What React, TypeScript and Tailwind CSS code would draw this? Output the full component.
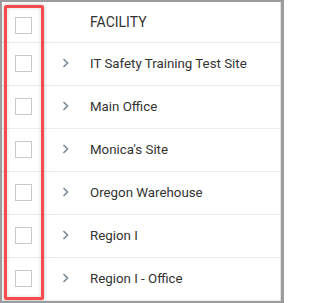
import React from "react";

const items = [
  "IT Safety Training Test Site",
  "Main Office",
  "Monica's Site",
  "Oregon Warehouse",
  "Region I",
  "Region I - Office",
];

function Box() {
  return <div className="w-[17px] h-[17px] border border-[#c9c9c9] bg-white shrink-0" />;
}

function Chevron() {
  return (
    <svg width="7" height="10" viewBox="0 0 7 10" className="shrink-0">
      <path d="M1.5 1 L5.5 5 L1.5 9" fill="none" stroke="#7f8c99" strokeWidth="1.7" />
    </svg>
  );
}

export default function App() {
  return (
    <div
      className="relative w-[284px] h-[303px] bg-white border-t-2 border-l-2 border-r-[3px] border-b-2 border-[#9c9c9c] overflow-hidden"
      style={{ fontFamily: "Roboto, 'Liberation Sans', sans-serif" }}
    >
      <div className="flex flex-col border-r border-[#e2e2e2] h-full">
        <div className="flex items-center h-[41px] border-b border-[#ececec] shrink-0">
          <div className="ml-[13px] mt-[6px]">
            <Box />
          </div>
          <div className="ml-[58px] text-[14px] text-[#333] mt-[1px]">FACILITY</div>
        </div>
        {items.map((t) => (
          <div key={t} className="flex items-center h-[43px] border-b border-[#ececec] shrink-0">
            <div className="ml-[13px] mb-[2px]">
              <Box />
            </div>
            <div className="ml-[30px] mb-[2px]">
              <Chevron />
            </div>
            <div className="ml-[21px] text-[13.3px] text-[#333]">{t}</div>
          </div>
        ))}
      </div>
      <div className="absolute left-[2px] top-[3px] w-[40px] h-[295px] border-[3px] border-[#f74b4b] rounded-[2px] shadow-[0_0_4px_rgba(0,0,0,0.25),inset_0_0_4px_rgba(0,0,0,0.15)]" />
    </div>
  );
}
